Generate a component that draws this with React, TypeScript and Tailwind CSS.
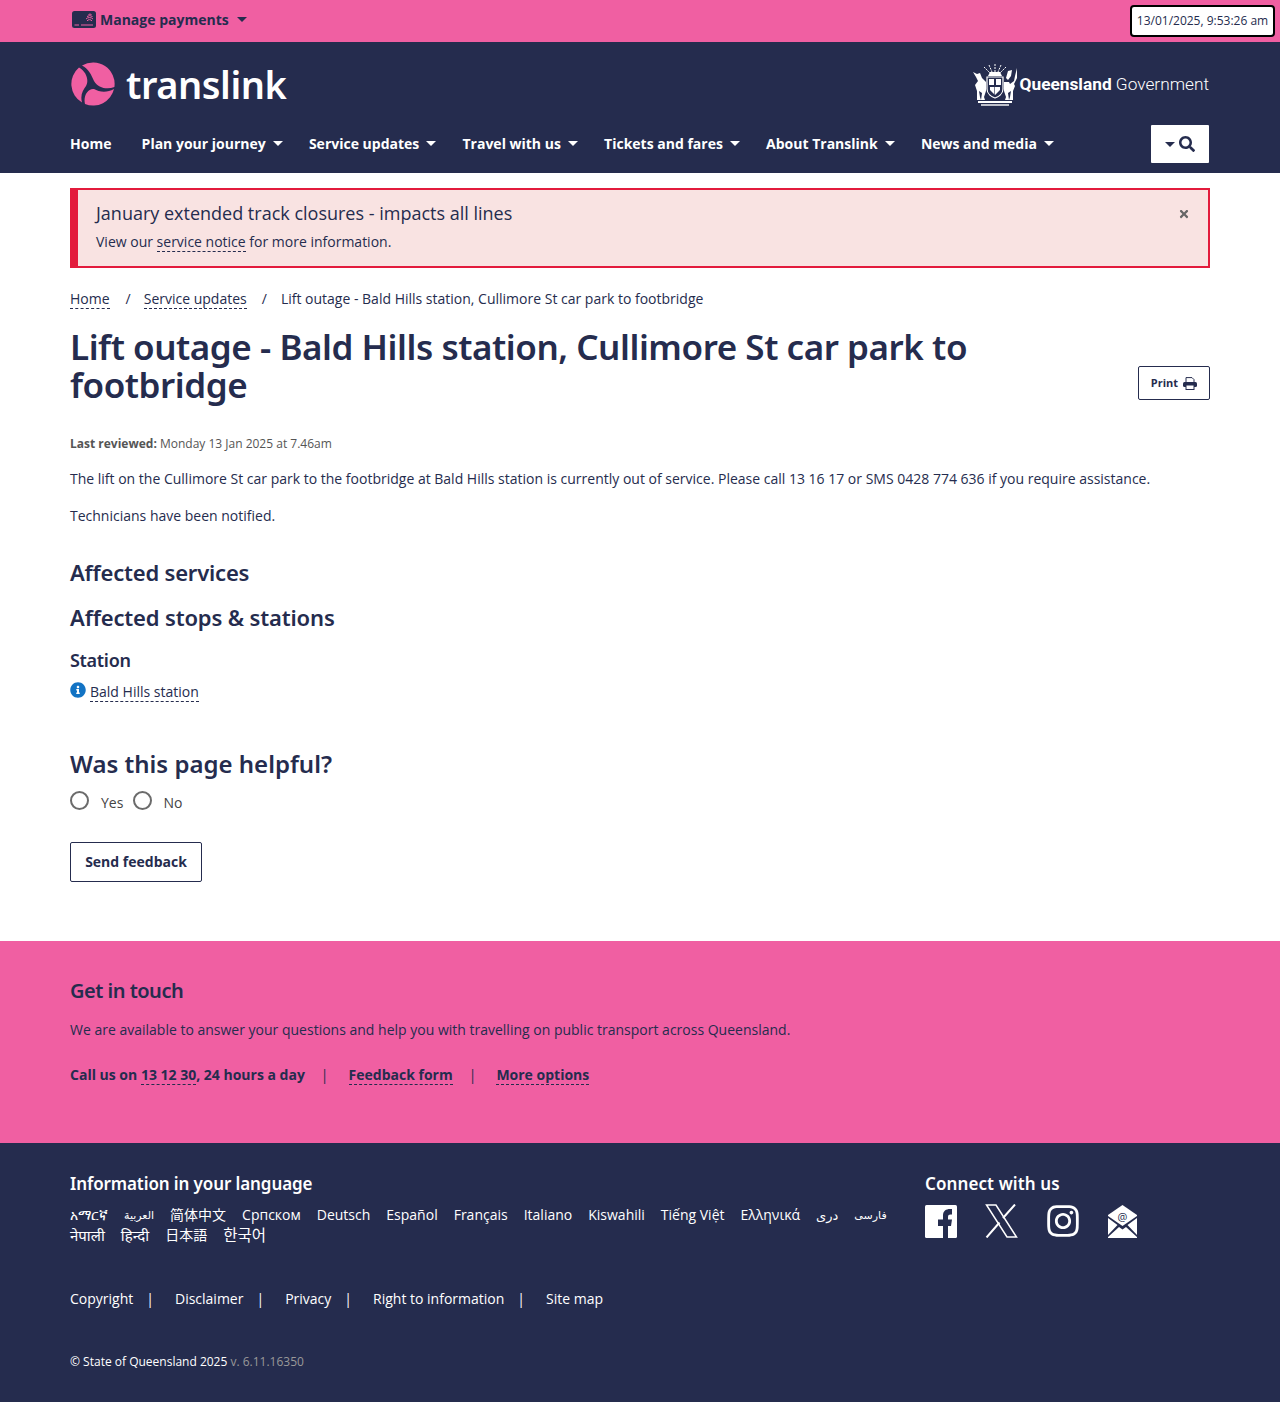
import React from 'react';
import { FaInfoCircle, FaInstagram, FaSearch, FaTimes } from 'react-icons/fa';

const navItems = ['Plan your journey', 'Service updates', 'Travel with us', 'Tickets and fares', 'About Translink', 'News and media'];

const languages = [
    { name: 'አማርኛ', size: '' },
    { name: 'العربية', size: 'text-[11px]' },
    { name: '简体中文', size: '' },
    { name: 'Српском', size: '' },
    { name: 'Deutsch', size: '' },
    { name: 'Español', size: '' },
    { name: 'Français', size: '' },
    { name: 'Italiano', size: '' },
    { name: 'Kiswahili', size: '' },
    { name: 'Tiếng Việt', size: '' },
    { name: 'Ελληνικά', size: '' },
    { name: 'دری', size: 'text-[13px]' },
    { name: 'فارسی', size: 'text-[11px]' },
    { name: 'नेपाली', size: 'text-[15px]' },
    { name: 'हिन्दी', size: 'text-[15px]' },
    { name: '日本語', size: '' },
    { name: '한국어', size: 'text-[15.5px]' },
];

const footerLinks = ['Copyright', 'Disclaimer', 'Privacy', 'Right to information', 'Site map'];

const Caret = ({ className }: { className: string }) => (
    <span className={`inline-block w-0 h-0 border-x-[5px] border-x-transparent border-t-[5px] ${className}`} />
);

const DashedLink = ({ children }: { children: React.ReactNode }) => (
    <a className="border-b border-dashed border-[#252c4e] text-[#252c4e]">{children}</a>
);

// the three lobes of the logo, on the navy header
const Logo = () => (
    <svg width="44" height="44" viewBox="0 0 44 44" fill="#f05fa2">
        <path d="M11 3.500A21.500 21.500 0 0 1 43.400 25C36 28 27 26 23 19C20.500 13 17 6 11 3.500Z" />
        <path d="M8 5.500A21.500 21.500 0 0 0 11 40.500C9 33 12 28 15 24C18 19 16 10 8 5.500Z" />
        <path d="M14 42A21.500 21.500 0 0 0 43 27C36 31 28 30 23 27C17 26 12 34 14 42Z" />
    </svg>
);

const Crest = () => (
    <svg width="44" height="42" viewBox="0 0 44 42" fill="#fff">
        <path d="M22 0V8M16 1L19 8M28 1L25 8M11 3L17 9M33 3L27 9" stroke="#fff" strokeWidth="1" strokeDasharray="2 1" />
        <path d="M17 8H27L29 12H15Z" />
        <path d="M14 13H30V25C30 30 25 33 22 34C19 33 14 30 14 25Z" fill="none" stroke="#fff" strokeWidth="1.200" />
        <path d="M16 15H21V21H16ZM23 15H28V21H23ZM17 23H27V26L22 31L17 26Z" />
        <path d="M21.500 14V31" stroke="#252c4e" strokeWidth="0.600" />
        <path d="M0 8L4 10L7 9L9 14L13 18V27L11 33L12 36H8L9 29L6 27L7 33L8 36H4L4 27L2 21L5 17L3 13Z" />
        <path d="M44 4L42 12L41 17L37 20L36 18L31 18V27L33 33L32 36H36L35 29L38 27L37 33L36 36H40L40 27L42 22L41 20L44 14ZM33 14L35 7L39 6L38 12L35 16Z" />
        <path d="M5 37H39V39H5Z" />
        <path d="M8 40H36V42H8Z" opacity="0.7" />
    </svg>
);

const CardIcon = () => (
    <svg width="24" height="17" viewBox="0 0 24 17">
        <rect width="24" height="17" rx="2.500" fill="#252c4e" />
        <path d="M2.500 14H7M9 14H21" stroke="#f05fa2" strokeWidth="1" />
        <path d="M15 10a3 3 0 0 1 5 0M14 8a5 5 0 0 1 7 0M15 5.500a5 5 0 0 1 5.500 0M16.500 3.500a3 3 0 0 1 3 0" stroke="#f05fa2" strokeWidth="1" fill="none" />
    </svg>
);

const PrintIcon = () => (
    <svg width="14" height="13" viewBox="0 0 14 13">
        <path d="M3 6V0.600H9L11 2.600V6" fill="#fff" stroke="#252c4e" strokeWidth="1" />
        <rect y="5" width="14" height="5" rx="1.500" fill="#252c4e" />
        <rect x="3" y="8" width="8" height="4.500" fill="#fff" stroke="#252c4e" strokeWidth="1" />
    </svg>
);

const FacebookIcon = () => (
    <svg width="32" height="33" viewBox="0 0 32 33">
        <rect width="32" height="33" rx="1.500" fill="#fff" />
        <path d="M18 33V21H13V14.500H18V10.500C18 6 21 4 25 4H27V9.500H25.500C23.800 9.500 23 10.300 23 12V14.500H27L26 21H23V33Z" fill="#252c4e" />
    </svg>
);

const XIcon = () => (
    <svg width="33" height="34" viewBox="0 0 33 34" fill="none" stroke="#fff">
        <path d="M1.500 1H11L31.500 33H22Z" strokeWidth="1.500" />
        <path d="M30 0.500L18 14M14.500 18.500L1.500 33.500" strokeWidth="2" />
    </svg>
);

const MailIcon = () => (
    <svg width="29" height="33" viewBox="0 0 29 33" fill="#fff">
        <path d="M14.500 0L29 10V11L14.500 21L0 11V10Z" />
        <path d="M0 13L9.500 20L0 30ZM29 13L19.500 20L29 30ZM11 22L14.500 24.500L18 22L29 32V33H0V32Z" />
        <text x="14.500" y="15.500" textAnchor="middle" fontSize="11" fill="#252c4e" fontFamily="Open Sans, sans-serif">@</text>
    </svg>
);

export default function App() {
    return (
        <div className="relative font-['Open_Sans',sans-serif] text-[14px] text-[#252c4e] bg-white">
            <div className="absolute right-[5px] top-[5px] w-[145px] h-[32px] flex items-center justify-center bg-white border-2 border-black rounded-[4px] text-[12px] text-[#252c4e]">
                13/01/2025, 9:53:26 am
            </div>

            <div className="h-[42px] bg-[#f05fa2]">
                <div className="w-[1140px] mx-auto flex items-center h-full pl-[2px] pb-[3px] gap-1">
                    <CardIcon />
                    <span className="font-bold">Manage payments</span>
                    <Caret className="ml-[4px] border-t-[#252c4e]" />
                </div>
            </div>

            <header className="bg-[#252c4e] h-[131px]">
                <div className="w-[1140px] mx-auto">
                    <div className="h-[83px] flex items-center justify-between">
                        <div className="flex items-center gap-[11px] pl-[1px]">
                            <Logo />
                            <span className="font-['Noto_Sans',sans-serif] text-[38px] tracking-[-0.45px] font-semibold leading-none text-white pt-[1px]">translink</span>
                        </div>
                        <div className="flex items-center gap-[3px] pr-[1px] pt-[3px]">
                            <Crest />
                            <span className="text-[17.3px] text-white font-['Roboto',sans-serif] font-light"><b className="font-bold">Queensland</b> Government</span>
                        </div>
                    </div>
                    <nav className="flex items-center justify-between h-[38px] pr-[1px]">
                        <ul className="flex items-center gap-[26.2px] font-bold text-white pb-[2px]">
                            <li className="mr-[4px]">Home</li>
                            {navItems.map((item) => (
                                <li key={item} className="flex items-center gap-[7px]">
                                    {item}
                                    <Caret className="border-t-white" />
                                </li>
                            ))}
                        </ul>
                        <button className="w-[58px] h-[38px] bg-white flex items-center justify-center gap-[4px] rounded-[1px]">
                            <Caret className="border-t-[#252c4e]" />
                            <FaSearch size={16} color="#252c4e" />
                        </button>
                    </nav>
                </div>
            </header>

            <main className="w-[1140px] mx-auto pt-[15px]">
                <div className="relative h-[80px] bg-[#f9e3e2] border-2 border-l-8 border-[#e31b3c] pl-[18px] pt-[10px]">
                    <p className="text-[18px] leading-[26px]">January extended track closures - impacts all lines</p>
                    <p className="mt-[6px] leading-[20px]">View our <DashedLink>service notice</DashedLink> for more information.</p>
                    <FaTimes size={12} color="#666" className="absolute right-[18px] top-[18px]" />
                </div>

                <div className="flex mt-[21px] leading-[19px]">
                    <DashedLink>Home</DashedLink>
                    <span className="ml-[16px] mr-[13px]">/</span>
                    <DashedLink>Service updates</DashedLink>
                    <span className="ml-[15px] mr-[14px]">/</span>
                    <span>Lift outage - Bald Hills station, Cullimore St car park to footbridge</span>
                </div>

                <div className="flex items-end justify-between mt-[19px]">
                    <h1 className="w-[920px] font-['Noto_Sans',sans-serif] text-[35px] tracking-[-0.45px] leading-[38px] font-semibold">Lift outage - Bald Hills station, Cullimore St car park to footbridge</h1>
                    <button className="w-[72px] h-[34px] mb-[4px] border border-[#252c4e] rounded-[2px] flex items-center justify-center gap-[5px] text-[11px] font-bold">
                        Print <PrintIcon />
                    </button>
                </div>

                <p className="mt-[31px] text-[12px] leading-[18px] text-[#555]"><b>Last reviewed:</b> Monday 13 Jan 2025 at 7.46am</p>
                <p className="mt-[16px] leading-[20px]">The lift on the Cullimore St car park to the footbridge at Bald Hills station is currently out of service. Please call 13 16 17 or SMS 0428 774 636 if you require assistance.</p>
                <p className="mt-[17px] leading-[20px]">Technicians have been notified.</p>

                <h2 className="mt-[31px] font-['Noto_Sans',sans-serif] text-[22px] tracking-[-0.2px] leading-[30px] font-semibold">Affected services</h2>
                <h2 className="mt-[15px] font-['Noto_Sans',sans-serif] text-[22px] tracking-[-0.15px] leading-[30px] font-semibold">Affected stops &amp; stations</h2>
                <h3 className="mt-[16px] font-['Noto_Sans',sans-serif] text-[18px] tracking-[-0.3px] leading-[24px] font-semibold">Station</h3>
                <div className="flex mt-[11px] gap-[4px] leading-[18px]">
                    <FaInfoCircle size={16} color="#1273c4" className="-mt-[1px]" />
                    <DashedLink>Bald Hills station</DashedLink>
                </div>

                <h2 className="mt-[46px] font-['Noto_Sans',sans-serif] text-[24px] leading-[32px] font-semibold">Was this page helpful?</h2>
                <div className="flex items-center mt-[10px] h-[20px]">
                    <span className="w-[19px] h-[19px] rounded-full border-2 border-[#6b6b6b]" />
                    <span className="ml-[12px] mt-[4px] text-[#444]">Yes</span>
                    <span className="ml-[10px] w-[19px] h-[19px] rounded-full border-2 border-[#6b6b6b]" />
                    <span className="ml-[11px] mt-[4px] text-[#444]">No</span>
                </div>
                <button className="mt-[32px] w-[132px] h-[40px] pb-[2px] border border-[#252c4e] rounded-[2px] font-bold">Send feedback</button>
            </main>

            <section className="mt-[59px] h-[202px] bg-[#f05fa2] pt-[36px]">
                <div className="w-[1140px] mx-auto">
                    <h2 className="font-['Noto_Sans',sans-serif] text-[20px] tracking-[-0.5px] leading-[28px] font-semibold">Get in touch</h2>
                    <p className="mt-[15px] leading-[20px]">We are available to answer your questions and help you with travelling on public transport across Queensland.</p>
                    <div className="flex mt-[25px] leading-[19px] font-bold">
                        <span>Call us on <DashedLink>13 12 30</DashedLink>, 24 hours a day</span>
                        <span className="ml-[16px] mr-[20px] font-normal">|</span>
                        <DashedLink>Feedback form</DashedLink>
                        <span className="ml-[16px] mr-[20px] font-normal">|</span>
                        <DashedLink>More options</DashedLink>
                    </div>
                </div>
            </section>

            <footer className="h-[259px] bg-[#252c4e] text-white pt-[28px]">
                <div className="w-[1140px] mx-auto">
                    <div className="flex">
                        <div className="w-[855px]">
                            <h2 className="font-['Noto_Sans',sans-serif] text-[17px] tracking-[-0.1px] leading-[26px] font-semibold">Information in your language</h2>
                            <ul className="flex flex-wrap w-[830px] mt-[8px] gap-x-[16px] leading-[20px] font-['Open_Sans','Noto_Sans','Noto_Sans_CJK_JP','DejaVu_Sans',sans-serif]">
                                {languages.map((lang) => (
                                    <li key={lang.name} className={lang.size}>{lang.name}</li>
                                ))}
                            </ul>
                        </div>
                        <div>
                            <h2 className="font-['Noto_Sans',sans-serif] text-[17px] tracking-[0.1px] leading-[26px] font-semibold">Connect with us</h2>
                            <div className="flex items-center mt-[6px]">
                                <FacebookIcon />
                                <span className="ml-[28px]"><XIcon /></span>
                                <FaInstagram size={36} className="ml-[27px]" />
                                <span className="ml-[27px]"><MailIcon /></span>
                            </div>
                        </div>
                    </div>

                    <ul className="flex mt-[44px] leading-[20px]">
                        {footerLinks.map((link, idx) => (
                            <li key={link} className="flex">
                                {link}
                                {idx < footerLinks.length - 1 && <span className="ml-[13px] mr-[21px]">|</span>}
                            </li>
                        ))}
                    </ul>

                    <p className="mt-[43px] text-[12px] leading-[20px]">© State of Queensland 2025 <span className="text-[#999]">v. 6.11.16350</span></p>
                </div>
            </footer>
        </div>
    );
}
